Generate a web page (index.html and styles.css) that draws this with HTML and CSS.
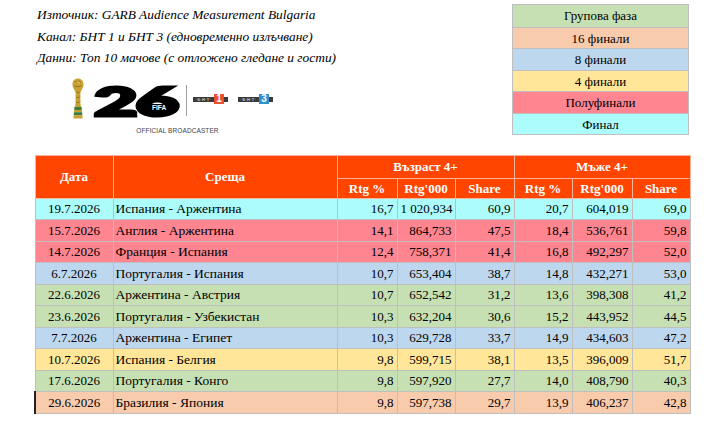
FILE: index.html
```html
<!DOCTYPE html>
<html lang="bg">
<head>
<meta charset="utf-8">
<title>Топ 10 мача</title>
<link rel="stylesheet" href="styles.css">
</head>
<body>
<div class="page">
  <div class="top">
    <div class="left">
      <div class="info">
        <p>Източник: GARB Audience Measurement Bulgaria</p>
        <p>Канал: БНТ 1 и БНТ 3 (едновременно излъчване)</p>
        <p>Данни: Топ 10 мачове (с отложено гледане и гости)</p>
      </div>
      <div class="brand">
        <div class="brand-row">
          <svg class="trophy" width="12" height="41" viewBox="0 0 12 41">
            <path d="M6 0.5C9.4 0.5 11.5 3 11.5 6.5C11.5 10 9.5 11.5 8.6 14C8 16.5 8.6 20 8.4 24C8.3 26 8.8 27.5 9.2 29H2.8C3.2 27.5 3.7 26 3.6 24C3.4 20 4 16.5 3.4 14C2.5 11.5 0.5 10 0.5 6.5C0.5 3 2.6 0.5 6 0.5Z" fill="#c9a133"/>
            <path d="M3 4C4.5 2.5 7.5 2.5 9 4.5M2.5 8C4.5 9 7 9 9.5 7.5M4.2 14C5.5 15 7 15 8 14M4 19C5.5 20 7 19.5 8.2 18.5M3.9 24C5.5 25 7 24.5 8.3 23.5" stroke="#8a6a1c" stroke-width="0.8" fill="none"/>
            <path d="M5 2.5C5.8 4 6.8 5 8 5.2" stroke="#f2d77a" stroke-width="0.8" fill="none"/>
            <rect x="2.3" y="29" width="7.4" height="3" fill="#3f7d3b"/>
            <rect x="2" y="32" width="8" height="2.2" fill="#c9a133"/>
            <rect x="1.8" y="34.2" width="8.4" height="3" fill="#3f7d3b"/>
            <rect x="1.5" y="37.2" width="9" height="3.3" fill="#c9a133"/>
          </svg>
          <div class="wc26">
            <span class="wc26-num">26</span>
            <span class="wc26-fifa">FIFA</span>
          </div>
          <span class="sep"></span>
          <div class="bnt">
            <span class="bnt-bar">·Б·Н·Т·</span>
            <span class="bnt-box bnt-one">1</span>
            <span class="bnt-tail"></span>
          </div>
          <div class="bnt">
            <span class="bnt-bar">·Б·Н·Т·</span>
            <span class="bnt-box bnt-three">3</span>
            <span class="bnt-tail"></span>
          </div>
        </div>
        <div class="brand-caption">OFFICIAL BROADCASTER</div>
      </div>
    </div>
    <div class="legend">
      <div class="lg c-group">Групова фаза</div>
      <div class="lg c-r32">16 финали</div>
      <div class="lg c-r16">8 финали</div>
      <div class="lg c-qf">4 финали</div>
      <div class="lg c-sf">Полуфинали</div>
      <div class="lg c-final">Финал</div>
    </div>
  </div>

  <table class="ratings">
    <colgroup>
      <col class="w-date"><col class="w-match">
      <col class="w-a"><col class="w-b"><col class="w-c">
      <col class="w-a2"><col class="w-b2"><col class="w-c2">
    </colgroup>
    <thead>
      <tr class="h1">
        <th rowspan="2">Дата</th>
        <th rowspan="2">Среща</th>
        <th colspan="3">Възраст 4+</th>
        <th colspan="3">Мъже 4+</th>
      </tr>
      <tr class="h2">
        <th>Rtg %</th><th>Rtg'000</th><th>Share</th>
        <th>Rtg %</th><th>Rtg'000</th><th>Share</th>
      </tr>
    </thead>
    <tbody>
      <tr class="c-final"><td class="d">19.7.2026</td><td class="m">Испания - Аржентина</td><td>16,7</td><td>1 020,934</td><td>60,9</td><td>20,7</td><td>604,019</td><td>69,0</td></tr>
      <tr class="c-sf"><td class="d">15.7.2026</td><td class="m">Англия - Аржентина</td><td>14,1</td><td>864,733</td><td>47,5</td><td>18,4</td><td>536,761</td><td>59,8</td></tr>
      <tr class="c-sf"><td class="d">14.7.2026</td><td class="m">Франция - Испания</td><td>12,4</td><td>758,371</td><td>41,4</td><td>16,8</td><td>492,297</td><td>52,0</td></tr>
      <tr class="c-r16"><td class="d">6.7.2026</td><td class="m">Португалия - Испания</td><td>10,7</td><td>653,404</td><td>38,7</td><td>14,8</td><td>432,271</td><td>53,0</td></tr>
      <tr class="c-group"><td class="d">22.6.2026</td><td class="m">Аржентина - Австрия</td><td>10,7</td><td>652,542</td><td>31,2</td><td>13,6</td><td>398,308</td><td>41,2</td></tr>
      <tr class="c-group"><td class="d">23.6.2026</td><td class="m">Португалия - Узбекистан</td><td>10,3</td><td>632,204</td><td>30,6</td><td>15,2</td><td>443,952</td><td>44,5</td></tr>
      <tr class="c-r16"><td class="d">7.7.2026</td><td class="m">Аржентина - Египет</td><td>10,3</td><td>629,728</td><td>33,7</td><td>14,9</td><td>434,603</td><td>47,2</td></tr>
      <tr class="c-qf"><td class="d">10.7.2026</td><td class="m">Испания - Белгия</td><td>9,8</td><td>599,715</td><td>38,1</td><td>13,5</td><td>396,009</td><td>51,7</td></tr>
      <tr class="c-group"><td class="d">17.6.2026</td><td class="m">Португалия - Конго</td><td>9,8</td><td>597,920</td><td>27,7</td><td>14,0</td><td>408,790</td><td>40,3</td></tr>
      <tr class="c-r32"><td class="d marked">29.6.2026</td><td class="m">Бразилия - Япония</td><td>9,8</td><td>597,738</td><td>29,7</td><td>13,9</td><td>406,237</td><td>42,8</td></tr>
    </tbody>
  </table>
</div>
</body>
</html>
```

FILE: styles.css
```css
* { box-sizing: border-box; }

html, body {
  margin: 0;
  padding: 0;
  background: #ffffff;
}

body {
  font-family: "Liberation Serif", "Times New Roman", serif;
  color: #000;
}

.page {
  width: 707px;
  padding: 4px 0 0 34px;
}

.top {
  display: flex;
  justify-content: space-between;
  width: 655px;
}

.info {
  padding-left: 3px;
}

.info p {
  margin: 0;
  font-style: italic;
  font-size: 13.4px;
  line-height: 21.5px;
  height: 21.5px;
  white-space: nowrap;
}

.brand {
  display: inline-flex;
  flex-direction: column;
  align-items: center;
  margin: 8px 0 0 38px;
}

.brand-row {
  display: flex;
  align-items: center;
  height: 42px;
}

.trophy {
  display: block;
  margin-top: 1px;
}

.wc26 {
  position: relative;
  width: 88px;
  height: 33px;
  margin-left: 8px;
  margin-top: 8px;
}

.wc26-num {
  display: block;
  font-family: "Lato", "DejaVu Sans", sans-serif;
  font-weight: 900;
  font-size: 40px;
  line-height: 33px;
  letter-spacing: -1px;
  -webkit-text-stroke: 3px #000;
  transform: scaleX(1.88);
  transform-origin: left center;
  color: #000;
  padding-left: 1px;
}

.wc26-fifa {
  position: absolute;
  left: 58px;
  top: 19px;
  background: #000;
  color: #fff;
  font-family: "Liberation Sans", Arial, sans-serif;
  font-weight: 700;
  font-size: 6.5px;
  line-height: 8px;
  padding: 0 2px;
}

.sep {
  width: 1px;
  height: 31px;
  background: #a0a0a0;
  margin: 6px 6px 0 6px;
}

.bnt {
  display: flex;
  align-items: center;
  margin-right: 10px;
  margin-top: 3px;
}

.bnt-bar {
  display: block;
  width: 21px;
  height: 5px;
  background: #3a3a3a;
  color: #fff;
  font-family: "Liberation Sans", Arial, sans-serif;
  font-size: 4px;
  line-height: 5px;
  text-align: center;
  letter-spacing: 0.3px;
  overflow: hidden;
}

.bnt-box {
  display: block;
  width: 10px;
  height: 10px;
  color: #fff;
  font-family: "Liberation Sans", Arial, sans-serif;
  font-weight: 700;
  font-size: 10px;
  line-height: 10px;
  text-align: center;
}

.bnt-one { background: #e8512a; }
.bnt-three { background: #2f8fd3; }

.bnt-tail {
  display: block;
  width: 4px;
  height: 5px;
  background: #3a3a3a;
}

.brand-caption {
  margin-top: 8px;
  font-family: "Liberation Sans", Arial, sans-serif;
  font-size: 6.5px;
  line-height: 7px;
  color: #444;
  letter-spacing: 0.1px;
}

.legend {
  width: 177px;
  border: 1px solid #bfbfbf;
  align-self: flex-start;
}

.lg {
  height: 21.5px;
  line-height: 21px;
  text-align: center;
  font-size: 13px;
  border-top: 1px solid #bfbfbf;
}

.lg:first-child { border-top: none; }

.c-group { background: #c6e0b4; }
.c-r32 { background: #f8cbad; }
.c-r16 { background: #bdd7ee; }
.c-qf { background: #ffe699; }
.c-sf { background: #ff8591; }
.c-final { background: #acfcfc; }

.ratings {
  margin-top: 20px;
  border-collapse: collapse;
  table-layout: fixed;
  width: 655px;
  font-size: 13px;
}

.w-date { width: 78px; }
.w-match { width: 224px; }
.w-a { width: 60px; }
.w-b { width: 58px; }
.w-c { width: 59px; }
.w-a2 { width: 58px; }
.w-b2 { width: 60px; }
.w-c2 { width: 58px; }

.ratings th {
  background: #ff4500;
  color: #fff;
  font-weight: bold;
  border: 1px solid #f6b49c;
  padding: 0;
  text-align: center;
  line-height: 1;
}

.ratings .h1 { height: 22.5px; }
.ratings .h2 { height: 20px; }

.ratings tbody tr { height: 21.5px; }

.ratings td {
  border: 1px solid #bfbfbf;
  padding: 0 3px 0 3px;
  text-align: right;
  line-height: 1;
  white-space: nowrap;
}

.ratings td.d { text-align: center; }
.ratings td.m {
  text-align: left;
  padding-left: 2px;
  font-size: 13.5px;
}
.ratings td.marked { border-left: 2px solid #222; }
```
